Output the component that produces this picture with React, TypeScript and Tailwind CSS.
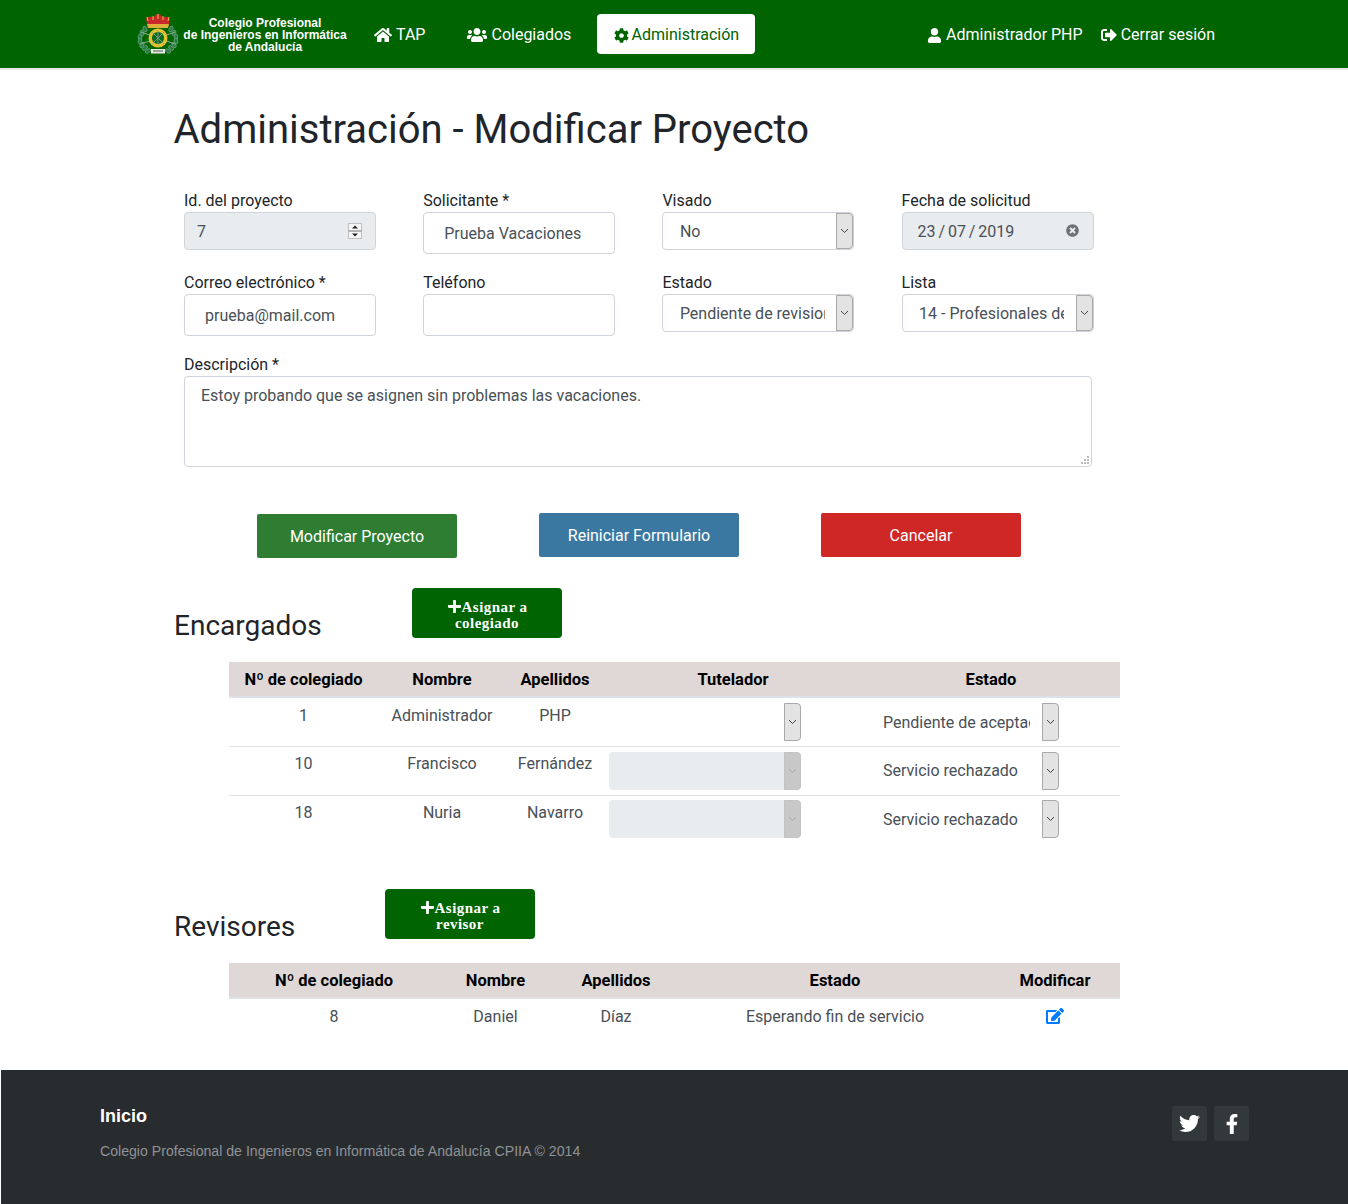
import React from "react";
import { FaHome, FaUsers, FaCog, FaUser, FaSignOutAlt, FaPlus, FaEdit, FaTwitter, FaFacebookF, FaTimesCircle } from "react-icons/fa";

const leaves = [
  [8, 16, -25],
  [5, 20, -15],
  [3, 24, 0],
  [3, 28, 10],
  [5, 32, 30],
  [8, 35, 45],
  [11, 38, 60],
];

const Logo = () => (
  <svg width="42" height="42" viewBox="0 0 42 42" className="shrink-0">
    {leaves.map(([x, y, r], i) => (
      <g key={i}>
        <ellipse cx={x} cy={y} rx="1.8" ry="3" transform={`rotate(${r} ${x} ${y})`} fill="#2a7a48" stroke="#8fc0a0" strokeWidth="0.5" />
        <ellipse cx={42 - x} cy={y} rx="1.8" ry="3" transform={`rotate(${-r} ${42 - x} ${y})`} fill="#2a7a48" stroke="#8fc0a0" strokeWidth="0.5" />
      </g>
    ))}
    <path d="M4 19 38 31M38 19 4 31" stroke="#8fb09a" strokeWidth="1" />
    <path d="M9 6c2-3 6-2 8-2 1-2 2-3 4-3s3 1 4 3c2 0 6-1 8 2l-2 8H11z" fill="#c6282b" />
    <path d="M10 4l1 4M16 3v4M21 1v5M26 3v4M32 4l-1 4" stroke="#e8bf45" strokeWidth="1" />
    <path d="M10 11h22l-1 4H11z" fill="#dfb13c" />
    <circle cx="21" cy="25" r="7.8" fill="#0c6a22" stroke="#e6c22f" strokeWidth="3.4" />
    <path d="M15 19l12 12M27 19 15 31M21 17v16" stroke="#7fa58a" strokeWidth="0.9" />
    <path d="M14 36h14v4.5H14z" fill="#e4ebe4" />
    <path d="M16 38h10" stroke="#47604d" strokeWidth="1" />
  </svg>
);

const Chevron = ({ muted }: { muted?: boolean }) => (
  <svg width="9" height="6" viewBox="0 0 9 6" fill="none">
    <path d="M1 1 4.5 4.5 8 1" stroke={muted ? "#a8a8a8" : "#444"} strokeWidth="1" />
  </svg>
);

type SelProps = { text?: string; pad?: string; bare?: boolean; disabled?: boolean; top?: string };

const Select = ({ text = "", pad = "pl-[16.5px] pr-[11.5px]", bare, disabled, top = "pt-[1px]" }: SelProps) => (
  <div
    className={`flex h-[38px] w-[192px] items-stretch rounded-[4px] ${bare ? "" : "border border-[#ced4da]"} ${disabled ? "bg-[#e9ecef]" : "bg-white"}`}
  >
    <div className={`min-w-0 flex-1 ${pad} flex items-center ${top}`}>
      <span className="block overflow-hidden whitespace-nowrap text-[16px] text-[#495057]">{text}</span>
    </div>
    <div
      className={`flex w-[17px] shrink-0 items-center justify-center rounded-r-[4px] border ${disabled ? "border-[#c4c4c4] bg-[#c8c8c8]" : "border-[#a9a9a9] bg-[#e3e3e3]"}`}
    >
      <Chevron muted={disabled} />
    </div>
  </div>
);

const Field = ({ label, children, className = "" }: { label: string; children: React.ReactNode; className?: string }) => (
  <div className={className}>
    <div className="h-[24px] pt-[1px] text-[16px] leading-[24px] text-[#212529]">{label}</div>
    {children}
  </div>
);

const inputCls =
  "block h-[42px] w-full rounded-[4px] border border-[#ced4da] bg-white pr-2 text-[16px] text-[#495057] outline-none";

const Assign = ({ first, second }: { first: string; second: string }) => (
  <button className="flex h-[50px] w-[150px] flex-col items-center justify-center rounded-[4px] bg-[#006400] pt-[3px] text-[15px] font-bold leading-[16px] tracking-[0.45px] text-white [font-family:'Liberation_Serif',serif]">
    <span className="flex items-center">
      <FaPlus className="text-[15px]" />
      {first}
    </span>
    <span>{second}</span>
  </button>
);

const thCls = "h-[35px] p-0 pt-[2px] text-center text-[16.5px] font-bold text-black";

const rows = [
  { id: "1", n: "Administrador", a: "PHP", dis: false, est: "Pendiente de aceptación", tt: "pt-[4px] pb-[16px]", st: "pt-[5px]", top: "pt-[1px]" },
  { id: "10", n: "Francisco", a: "Fernández", dis: true, est: "Servicio rechazado", tt: "pt-[3px] pb-[17px]", st: "pt-[5px]", top: "pt-[1px]" },
  { id: "18", n: "Nuria", a: "Navarro", dis: true, est: "Servicio rechazado", tt: "pt-[3px] pb-[17px]", st: "pt-[4px]", top: "pt-[3px]" },
];

export default function App() {
  return (
    <div className="min-h-[1204px] bg-white text-[16px] text-[#212529] [font-family:Roboto,sans-serif]">
      <nav className="flex h-[70px] items-start border-b-2 border-[#e9e9e9] bg-[#006400] pl-[137px] pr-[133px] text-white">
        <div className="flex h-[68px] w-full items-center pt-[2px]">
          <div className="-mt-[2px]">
            <Logo />
          </div>
          <div className="ml-[4px] w-[164px] text-center text-[12px] font-bold leading-[12px] [font-family:'Liberation_Sans',sans-serif]">
            <div>Colegio Profesional</div>
            <div>de Ingenieros en Informática</div>
            <div>de Andalucía</div>
          </div>
          <a className="ml-[27px] flex items-center gap-[4px]">
            <FaHome className="text-[18px]" /> TAP
          </a>
          <a className="ml-[42px] flex items-center gap-[4px]">
            <FaUsers className="text-[20px]" /> Colegiados
          </a>
          <a className="-mt-[2px] ml-[26px] flex h-[40px] w-[158px] items-center justify-center gap-[3px] rounded-[4px] bg-white pt-[2px] text-[#006400]">
            <FaCog className="text-[15px]" /> Administración
          </a>
          <div className="ml-auto flex items-center gap-[18px]">
            <a className="flex items-center gap-[4px]">
              <FaUser className="text-[15px]" /> Administrador PHP
            </a>
            <a className="flex items-center gap-[4px]">
              <FaSignOutAlt className="text-[16px]" /> Cerrar sesión
            </a>
          </div>
        </div>
      </nav>

      <main className="pl-[174px]">
        <h1 className="-ml-[0.5px] pb-0 pt-[36px] text-[40px] font-normal leading-[48px] text-[#212529]">Administración - Modificar Proyecto</h1>

        <div className="ml-[10px] mt-[34px] w-[910px]">
          <div className="grid grid-cols-[192px_192px_192px_192px] gap-x-[47.2px] gap-y-[16px]">
            <div className="h-[66px]">
              <Field label="Id. del proyecto">
                <div className="flex h-[38px] items-center justify-between rounded-[4px] border border-[#ced4da] bg-[#e9ecef] pl-[12px] pr-[13px] pt-[1px] text-[#495057]">
                  <span>7</span>
                  <svg width="14" height="16" viewBox="0 0 14 16" className="-mt-[1px]">
                    <rect x="0.5" y="0.5" width="13" height="15" fill="#f5f5f5" stroke="#c0c0c0" />
                    <rect x="0" y="7" width="14" height="2" fill="#b5b5b5" />
                    <path d="M7 2.5 10 5.5H4zM7 13.5 4 10.5h6z" fill="#222" />
                  </svg>
                </div>
              </Field>
            </div>
            <Field label="Solicitante *">
              <input readOnly value="Prueba Vacaciones" className={`${inputCls} pl-[20px]`} />
            </Field>
            <Field label="Visado">
              <Select text="No" />
            </Field>
            <Field label="Fecha de solicitud">
              <div className="flex h-[38px] items-center justify-between rounded-[4px] border border-[#ced4da] bg-[#e9ecef] pl-[15px] pr-[14px] pt-[1px] text-[#495057]">
                <span className="[word-spacing:-1.1px]">23 / 07 / 2019</span>
                <FaTimesCircle className="-mt-[3px] text-[13px] text-[#6d7276]" />
              </div>
            </Field>
            <Field label="Correo electrónico *">
              <input readOnly value="prueba@mail.com" className={`${inputCls} pl-[20px]`} />
            </Field>
            <Field label="Teléfono">
              <input readOnly value="" className={inputCls} />
            </Field>
            <Field label="Estado">
              <Select text="Pendiente de revision" />
            </Field>
            <Field label="Lista">
              <Select text="14 - Profesionales de la informática" />
            </Field>
          </div>
          <Field label="Descripción *" className="mt-[16px]">
            <div className="relative w-[908px]">
              <textarea
                readOnly
                value="Estoy probando que se asignen sin problemas las vacaciones."
                className="block h-[91px] w-[908px] resize-none rounded-[4px] border border-[#ced4da] px-[16px] py-[7px] text-[16px] leading-[24px] text-[#495057] outline-none"
              />
              <svg width="8" height="8" viewBox="0 0 8 8" className="absolute bottom-[3px] right-[3px]">
                <path d="M6 0h2v2H6zM3 3h2v2H3zM6 3h2v2H6zM0 6h2v2H0zM3 6h2v2H3zM6 6h2v2H6z" fill="#bdbdbd" />
              </svg>
            </div>
          </Field>
        </div>

        <div className="ml-[83px] mt-[46px] flex items-start gap-[82px]">
          <button className="mt-[1px] h-[44px] w-[200px] rounded-[2px] bg-[#2e7d32] pt-[2px] text-white">Modificar Proyecto</button>
          <button className="h-[44px] w-[200px] rounded-[2px] bg-[#3b78a1] pt-[2px] text-white">Reiniciar Formulario</button>
          <button className="h-[44px] w-[200px] rounded-[2px] bg-[#cf2626] pt-[2px] text-white">Cancelar</button>
        </div>

        <section className="mt-[30px] flex h-[50px] items-end">
          <h2 className="-mb-[5px] w-[238px] text-[28px] font-normal leading-[34px] text-[#212529]">Encargados</h2>
          <Assign first="Asignar a" second="colegiado" />
        </section>

        <table className="ml-[55px] mt-[24px] w-[891px] table-fixed border-collapse">
          <thead>
            <tr className="border-b-2 border-[#dee2e6] bg-[#e0d8d7]">
              <th className={`${thCls} w-[149px]`}>Nº de colegiado</th>
              <th className={`${thCls} w-[128px]`}>Nombre</th>
              <th className={`${thCls} w-[98px]`}>Apellidos</th>
              <th className={`${thCls} w-[258px]`}>Tutelador</th>
              <th className={`${thCls} w-[258px]`}>Estado</th>
            </tr>
          </thead>
          <tbody className="text-center text-[#495057]">
            {rows.map((r, i) => (
              <tr key={i} className={i < 2 ? "h-[49px] border-b border-[#dee2e6]" : "h-[49px]"}>
                <td className={r.tt}>{r.id}</td>
                <td className={r.tt}>{r.n}</td>
                <td className={r.tt}>{r.a}</td>
                <td className={`px-0 pl-[5px] align-top ${r.st}`}>
                  <Select bare disabled={r.dis} />
                </td>
                <td className={`px-0 pl-[5px] text-left align-top ${r.st}`}>
                  <Select bare text={r.est} pad="pl-[16px] pr-[12px]" top={r.top} />
                </td>
              </tr>
            ))}
          </tbody>
        </table>

        <section className="mt-[45px] flex h-[50px] items-end">
          <h2 className="-mb-[5px] w-[211px] text-[28px] font-normal leading-[34px] text-[#212529]">Revisores</h2>
          <Assign first="Asignar a" second="revisor" />
        </section>

        <table className="ml-[55px] mt-[24px] w-[891px] table-fixed border-collapse">
          <thead>
            <tr className="border-b-2 border-[#dee2e6] bg-[#e0d8d7]">
              <th className={`${thCls} w-[210px]`}>Nº de colegiado</th>
              <th className={`${thCls} w-[113px]`}>Nombre</th>
              <th className={`${thCls} w-[128px]`}>Apellidos</th>
              <th className={`${thCls} w-[310px]`}>Estado</th>
              <th className={`${thCls} w-[130px]`}>Modificar</th>
            </tr>
          </thead>
          <tbody className="text-center text-[#495057]">
            <tr className="h-[36px]">
              <td className="p-0">8</td>
              <td className="p-0">Daniel</td>
              <td className="p-0">Díaz</td>
              <td className="p-0">Esperando fin de servicio</td>
              <td className="p-0">
                <FaEdit className="mx-auto -mt-[2px] text-[18px] text-[#007bff]" />
              </td>
            </tr>
          </tbody>
        </table>
      </main>

      <footer className="ml-[1px] mt-[36px] flex h-[134px] items-start justify-between bg-[#292c2f] pl-[99px] pr-[99px]">
        <div>
          <div className="mt-[35px] text-[18px] font-bold leading-[22px] text-white [font-family:'Liberation_Sans',sans-serif]">Inicio</div>
          <div className="mt-[14px] text-[14.12px] leading-[20px] text-[#8f9296] [font-family:'Liberation_Sans',sans-serif]">
            Colegio Profesional de Ingenieros en Informática de Andalucía CPIIA © 2014
          </div>
        </div>
        <div className="mt-[36px] flex gap-[7px]">
          <a className="flex h-[35px] w-[35px] items-center justify-center rounded-[2px] bg-[#33383b] text-white">
            <FaTwitter className="text-[21px]" />
          </a>
          <a className="flex h-[35px] w-[35px] items-center justify-center rounded-[2px] bg-[#33383b] text-white">
            <FaFacebookF className="text-[20px]" />
          </a>
        </div>
      </footer>
    </div>
  );
}
